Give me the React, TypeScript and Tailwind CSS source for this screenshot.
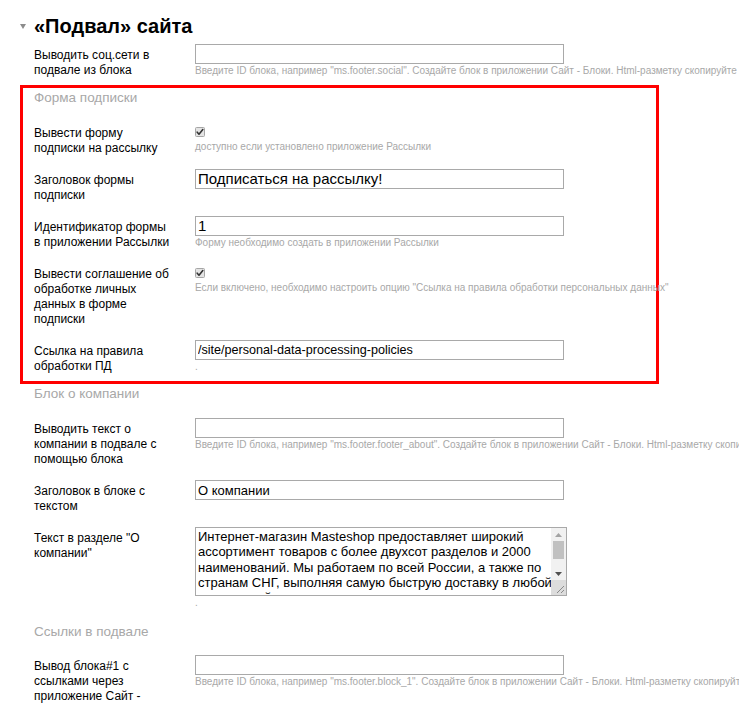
import React from "react";

function Label({ lines }: { lines: string[] }) {
  return (
    <div className="w-[161px] shrink-0 pt-[4px] text-[12px] leading-[15px] text-black">
      {lines.map((l, i) => (
        <div key={i} className="whitespace-nowrap">
          {l}
        </div>
      ))}
    </div>
  );
}

function Hint({ children, mt = "mt-[1px]" }: { children: React.ReactNode; mt?: string }) {
  return (
    <div className={`${mt} h-[12px] text-[10px] leading-[12px] text-[#a8a8a8] whitespace-nowrap`}>
      {children}
    </div>
  );
}

function TextInput({ value, size = "text-[13px]" }: { value: string; size?: string }) {
  return (
    <input
      readOnly
      value={value}
      className={`block w-[369px] h-[20px] border border-[#a9a9a9] bg-white px-[2px] ${size} text-black outline-none`}
    />
  );
}

function Checkbox() {
  return (
    <svg width="10" height="10" viewBox="0 0 10 10" className="mt-[5px] block">
      <rect x="0.5" y="0.5" width="9" height="9" rx="1" fill="#e4e4e4" stroke="#a6a6a6" />
      <path d="M2.2 5.2 L4 7.2 L7.8 2.6" fill="none" stroke="#333" strokeWidth="1.6" strokeLinecap="round" strokeLinejoin="round" />
    </svg>
  );
}

function Row({ lines, children }: { lines: string[]; children: React.ReactNode }) {
  return (
    <div className="flex">
      <Label lines={lines} />
      <div className="flex flex-col">{children}</div>
    </div>
  );
}

function SectionTitle({ children, className = "" }: { children: React.ReactNode; className?: string }) {
  return <div className={`h-[18px] text-[13.5px] leading-[18px] text-[#a8a8a8] ${className}`}>{children}</div>;
}

function FakeTextarea() {
  const lines = [
    "Интернет-магазин Masteshop предоставляет широкий",
    "ассортимент товаров с более двухсот разделов и 2000",
    "наименований. Мы работаем по всей России, а также по",
    "странам СНГ, выполняя самую быструю доставку в любой",
    "населенный пункт.",
  ];
  return (
    <div className="flex w-[372px] h-[69px] border border-[#a9a9a9] bg-white">
      <div className="flex-1 overflow-hidden px-[2px] pt-[1px] text-[13px] leading-[15.3px] text-black">
        {lines.map((l, i) => (
          <div key={i} className="whitespace-nowrap">
            {l}
          </div>
        ))}
      </div>
      <div className="flex w-[15px] flex-col bg-[#f1f1f1]">
        <div className="flex h-[13px] items-center justify-center">
          <svg width="7" height="4" viewBox="0 0 7 4">
            <path d="M0 4 L3.5 0 L7 4 Z" fill="#a3a3a3" />
          </svg>
        </div>
        <div className="mx-[2px] h-[18px] bg-[#c1c1c1]" />
        <div className="flex-1" />
        <div className="flex h-[13px] items-center justify-center">
          <svg width="7" height="4" viewBox="0 0 7 4">
            <path d="M0 0 L7 0 L3.5 4 Z" fill="#505050" />
          </svg>
        </div>
        <div className="flex h-[15px] items-end justify-end bg-[#dcdcdc] p-[1px]">
          <svg width="10" height="10" viewBox="0 0 10 10">
            <path d="M9 2 L2 9 M9 6 L6 9" stroke="#8a8a8a" strokeWidth="1" />
          </svg>
        </div>
      </div>
    </div>
  );
}

export default function App() {
  return (
    <div className="relative h-[703px] w-[739px] overflow-hidden bg-white pl-[34px] pt-[14px] font-['Liberation_Sans',Arial,sans-serif]">
      {/* Heading */}
      <div className="-ml-[14px] flex h-[24px] items-center">
        <svg width="6" height="5" viewBox="0 0 6 5" className="mr-[8px] mt-[1px]">
          <path d="M0 0 L6 0 L3 5 Z" fill="#8c8c8c" />
        </svg>
        <div className="text-[20px] font-bold leading-[24px] text-black">«Подвал» сайта</div>
      </div>

      <div className="mt-[6px]">
        <Row lines={["Выводить соц.сети в", "подвале из блока"]}>
          <TextInput value="" />
          <Hint>
            Введите ID блока, например "ms.footer.social". Создайте блок в приложении Сайт - Блоки. Html-разметку скопируйте в блок
          </Hint>
        </Row>
      </div>

      {/* Highlighted subscription section */}
      <div className="-ml-[14px] mt-[7px] w-[639px] border-[3px] border-[#ff0000] pb-[7px] pl-[11px] pt-[1px]">
        <SectionTitle className="mb-[15px]">Форма подписки</SectionTitle>
        <div className="flex flex-col gap-[13px]">
          <Row lines={["Вывести форму", "подписки на рассылку"]}>
            <Checkbox />
            <Hint mt="mt-[4px]">доступно если установлено приложение Рассылки</Hint>
          </Row>
          <Row lines={["Заголовок формы", "подписки"]}>
            <TextInput value="Подписаться на рассылку!" size="text-[15px]" />
          </Row>
          <Row lines={["Идентификатор формы", "в приложении Рассылки"]}>
            <TextInput value="1" size="text-[15px]" />
            <Hint>Форму необходимо создать в приложении Рассылки</Hint>
          </Row>
          <Row lines={["Вывести соглашение об", "обработке личных", "данных в форме", "подписки"]}>
            <Checkbox />
            <Hint mt="mt-[4px]">
              Если включено, необходимо настроить опцию "Ссылка на правила обработки персональных данных"
            </Hint>
          </Row>
          <Row lines={["Ссылка на правила", "обработки ПД"]}>
            <TextInput value="/site/personal-data-processing-policies" size="text-[12.6px]" />
            <Hint>.</Hint>
          </Row>
        </div>
      </div>

      <SectionTitle className="mb-[15px] mt-[1px]">Блок о компании</SectionTitle>
      <div className="flex flex-col gap-[13px]">
        <Row lines={["Выводить текст о", "компании в подвале с", "помощью блока"]}>
          <TextInput value="" />
          <Hint>
            Введите ID блока, например "ms.footer.footer_about". Создайте блок в приложении Сайт - Блоки. Html-разметку скопируйте в блок
          </Hint>
        </Row>
        <Row lines={["Заголовок в блоке с", "текстом"]}>
          <TextInput value="О компании" size="text-[13px]" />
        </Row>
        <Row lines={['Текст в разделе "О', 'компании"']}>
          <FakeTextarea />
          <Hint>.</Hint>
        </Row>
      </div>

      <SectionTitle className="mb-[14px] mt-[14px]">Ссылки в подвале</SectionTitle>
      <div className="flex flex-col gap-[13px]">
        <Row lines={["Вывод блока#1 с", "ссылками через", "приложение Сайт -", "Блоки"]}>
          <TextInput value="" />
          <Hint>
            Введите ID блока, например "ms.footer.block_1". Создайте блок в приложении Сайт - Блоки. Html-разметку скопируйте в блок
          </Hint>
        </Row>
      </div>
    </div>
  );
}
